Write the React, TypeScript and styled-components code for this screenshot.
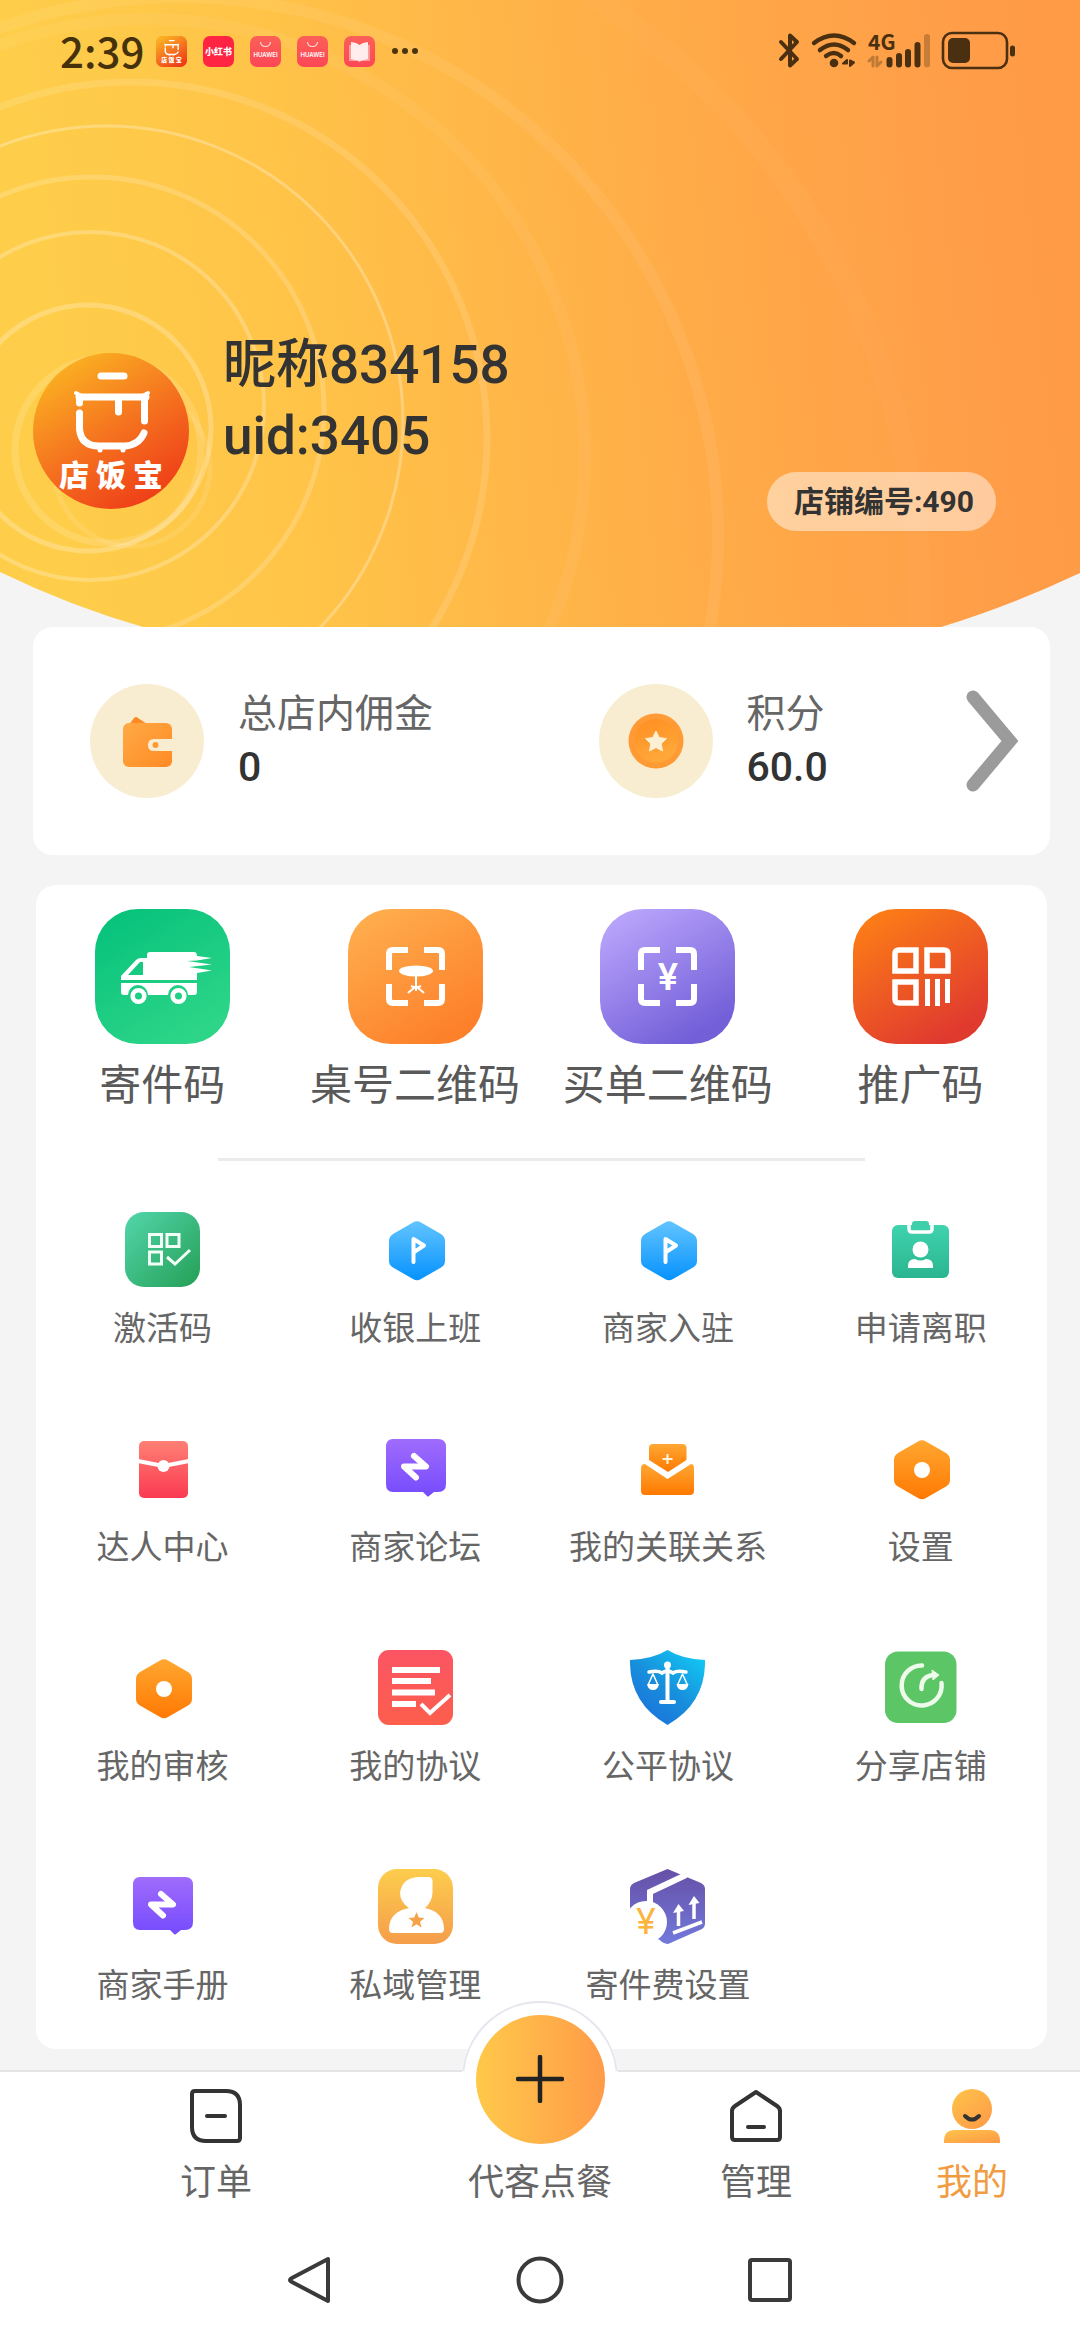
import React from "react";
import styled, { createGlobalStyle } from "styled-components";

const GlobalStyle = createGlobalStyle`
  * { box-sizing: border-box; }
  body { margin: 0; background: #f4f4f4; }
  button, a { font: inherit; color: inherit; text-decoration: none; border: 0; background: none; padding: 0; cursor: pointer; }
  svg { display: block; }
`;

const Page = styled.div`
  min-height: 100vh;
  display: flex;
  flex-direction: column;
  overflow-x: hidden;
  color: #666;
  font-family: Roboto, "Noto Sans CJK SC", sans-serif;
`;

/* ---------- header ---------- */

const Hero = styled.header`
  position: relative;
`;

const HeroArt = styled.svg`
  position: absolute;
  inset: 0;
  width: 100%;
  height: 100%;
`;

const StatusBar = styled.div`
  position: relative;
  display: flex;
  align-items: center;
  justify-content: space-between;
  height: 102px;
  padding: 0 64px 0 60px;
  color: #4a3410;
`;

const StatusGroup = styled.div<{ $gap: number }>`
  display: flex;
  align-items: center;
  gap: ${(p) => p.$gap}px;
`;

const Clock = styled.time`
  margin-right: -4px;
  padding-bottom: 2px;
  font: 500 42px/50px "Noto Sans CJK SC", sans-serif;
  color: #45310c;
`;

const Profile = styled.section`
  position: relative;
  display: flex;
  align-items: flex-start;
  padding: 228px 84px 96px 33px;
`;

const Avatar = styled.button`
  margin-top: 23px;
  border-radius: 50%;
  overflow: hidden;
`;

const Identity = styled.h1`
  flex: 1;
  margin: 0 0 0 34px;
  min-height: 201px;
  color: #333;
  font-size: 53px;
  font-weight: 500;
  line-height: 71px;
`;

const Line = styled.span`
  display: block;
`;

const ShopBadge = styled.span`
  align-self: flex-end;
  padding: 0 22px 0 27px;
  border-radius: 30px;
  background: rgba(255, 255, 255, 0.47);
  color: #333;
  font-size: 30px;
  font-weight: 700;
  line-height: 59px;
  white-space: nowrap;
`;

/* ---------- balance card ---------- */

const Balance = styled.section`
  position: relative;
  display: flex;
  margin: 0 30px 0 33px;
  border-radius: 20px;
  background: #fff;
`;

const BalanceItem = styled.button`
  flex: 1;
  display: flex;
  align-items: center;
  padding: 57px 32px 57px 57px;
  text-align: left;
`;

const BalanceText = styled.span`
  flex: 1;
  display: flex;
  flex-direction: column;
  margin-left: 34px;
`;

const BalanceLabel = styled.span`
  font-size: 39px;
  line-height: 52px;
`;

const BalanceValue = styled.span`
  color: #333;
  font-size: 41px;
  font-weight: 500;
  line-height: 54px;
`;

/* ---------- services card ---------- */

const Services = styled.section`
  margin: 30px 33px 21px 36px;
  padding: 24px 0 39px;
  border-radius: 20px;
  background: #fff;
`;

const CodeGrid = styled.div`
  display: grid;
  grid-template-columns: repeat(4, 1fr);
`;

const CodeItem = styled.button`
  display: flex;
  flex-direction: column;
  align-items: center;
  gap: 14px;
  color: #595959;
  font-size: 42px;
  line-height: 56px;
  white-space: nowrap;
`;

const Divider = styled.hr`
  width: 64%;
  height: 3px;
  margin: 44px auto 51px;
  border: 0;
  background: #ebebeb;
`;

const ToolGrid = styled.div`
  display: grid;
  grid-template-columns: repeat(4, 1fr);
  row-gap: 78px;
`;

const ToolItem = styled.button`
  display: flex;
  flex-direction: column;
  align-items: center;
  gap: 18px;
  font-size: 33px;
  line-height: 48px;
  white-space: nowrap;
`;

/* ---------- bottom bars ---------- */

const TabBar = styled.nav`
  display: grid;
  grid-template-columns: 2fr 1fr 1fr 1fr;
  align-items: end;
  border-top: 2px solid #e4e4e7;
  background: #fff;
`;

const Tab = styled.a<{ $active?: boolean }>`
  display: flex;
  flex-direction: column;
  align-items: center;
  gap: 14px;
  color: ${(p) => (p.$active ? "#f19c42" : "#666")};
  font-size: 36px;
  line-height: 52px;
  white-space: nowrap;
`;

const OrderTab = styled(Tab)`
  margin-top: -71px;
  gap: 0;
`;

const Bubble = styled.span`
  position: relative;
  display: grid;
  place-items: center;
  width: 156px;
  height: 156px;
  border-radius: 50%;
  background: #fff;

  &::before {
    content: "";
    position: absolute;
    inset: 0;
    border: 2px solid #e6e6ee;
    border-radius: 50%;
    clip-path: inset(0 0 86px 0);
  }
`;

const PlusDisc = styled.span`
  display: grid;
  place-items: center;
  width: 129px;
  height: 129px;
  border-radius: 50%;
  background: linear-gradient(90deg, #ffc94a, #ff9b48);
`;

const SystemBar = styled.div`
  flex: 1;
  display: flex;
  justify-content: center;
  gap: 182px;
  padding: 47px 0 36px;
  background: #fff;
`;

const SystemKey = styled.button`
  width: 48px;
  height: 48px;
`;

/* ---------- drawings ---------- */

type GradProps = { id: string; from: string; to: string; x2?: number; y2?: number };
const Grad = ({ id, from, to, x2 = 1, y2 = 1 }: GradProps) => (
  <linearGradient id={id} x1="0" y1="0" x2={x2} y2={y2}>
    <stop offset="0" stopColor={from} />
    <stop offset="1" stopColor={to} />
  </linearGradient>
);

const CJK = "'Noto Sans CJK SC', sans-serif";

const rings = [
  { cx: 108, cy: 450, r: 93, w: 7, o: 0.14 },
  { cx: 132, cy: 468, r: 78, w: 5, o: 0.1 },
  { cx: 88, cy: 428, r: 123, w: 5, o: 0.24 },
  { cx: 90, cy: 406, r: 174, w: 4, o: 0.24 },
  { cx: 92, cy: 409, r: 232, w: 5, o: 0.18 },
  { cx: 107, cy: 422, r: 296, w: 3, o: 0.28 },
  { cx: 131, cy: 438, r: 356, w: 7, o: 0.13 },
  { cx: 148, cy: 456, r: 437, w: 12, o: 0.05 },
  { cx: 180, cy: 535, r: 538, w: 12, o: 0.07 },
  { cx: 200, cy: 600, r: 720, w: 22, o: 0.025 },
];

const HeroBackground = () => (
  <HeroArt viewBox="0 0 1080 627" preserveAspectRatio="none" aria-hidden="true">
    <defs>
      <linearGradient id="hero" x1="0" y1="0.06" x2="1" y2="0">
        <stop offset="0" stopColor="#fece4a" />
        <stop offset="0.25" stopColor="#ffc348" />
        <stop offset="0.6" stopColor="#ffac48" />
        <stop offset="0.9" stopColor="#ff9c48" />
        <stop offset="1" stopColor="#ff9b46" />
      </linearGradient>
      <clipPath id="heroClip">
        <path d="M0 0H1080V573Q1010 606 941 627H143Q70 606 0 572Z" />
      </clipPath>
    </defs>
    <g clipPath="url(#heroClip)">
      <rect width="1080" height="627" fill="url(#hero)" />
      {rings.map((g) => (
        <circle key={g.r} cx={g.cx} cy={g.cy} r={g.r} fill="none" stroke="#fff" strokeWidth={g.w} strokeOpacity={g.o} />
      ))}
    </g>
  </HeroArt>
);

const PotMark = () => (
  <g fill="none" stroke="#fff" strokeWidth="7" strokeLinecap="round">
    <path d="M68 23H91" />
    <path d="M46 44H113M111.500 44V68M85.500 44V59M46.500 44V50" />
    <path d="M43 40L50 44M115 40L108 44" strokeWidth="4" />
    <path d="M46.500 60V76Q48 93 66 93H92Q106 92 111 80" />
    <path d="M67 94V97M90 94V97" strokeWidth="5" />
  </g>
);

const AvatarArt = ({ size, id }: { size: number; id: string }) => (
  <svg width={size} height={size} viewBox="0 0 156 156" aria-label="店饭宝">
    <defs>
      <linearGradient id={id} x1="0.15" y1="0.05" x2="0.75" y2="1">
        <stop offset="0" stopColor="#fbb422" />
        <stop offset="0.5" stopColor="#f5741f" />
        <stop offset="1" stopColor="#ee3a17" />
      </linearGradient>
    </defs>
    <rect width="156" height="156" fill={`url(#${id})`} />
    <PotMark />
    <text x="26 63 100" y="133" fontSize="30" fontWeight="900" fill="#fff" fontFamily={CJK}>店饭宝</text>
  </svg>
);

const AppTile = styled.span<{ $bg: string }>`
  width: 31px;
  height: 31px;
  border-radius: 7px;
  overflow: hidden;
  background: ${(p) => p.$bg};
`;

const HuaweiTile = () => (
  <AppTile $bg="linear-gradient(#fb6058, #fd4656)">
    <svg width="31" height="31" viewBox="0 0 31 31">
      <path d="M10.500 6Q11 10.500 15.500 10.500T20.500 6" fill="none" stroke="#ffd9d6" strokeWidth="1.200" />
      <text x="15.500" y="20.500" textAnchor="middle" fontSize="6" fontWeight="600" fill="#fff" fontFamily="Inter, sans-serif">HUAWEI</text>
    </svg>
  </AppTile>
);

const Dots = () => (
  <svg width="28" height="8" viewBox="0 0 28 8" fill="#4a3410">
    <circle cx="4" cy="4" r="3" /><circle cx="14" cy="4" r="3" /><circle cx="24" cy="4" r="3" />
  </svg>
);

const StatusIcons = () => (
  <svg width="240" height="60" viewBox="776 21 240 60" fill="none" stroke="#4a3010" strokeLinecap="round" strokeLinejoin="round" aria-label="状态">
    <path d="M781 42L797 59L790 65.500V35.500L797 42L781 59" strokeWidth="4" />
    <path d="M814 43Q834 28 854 43M820 50Q834 39 848 50M826 56Q834 50 841 56" strokeWidth="4.500" />
    <circle cx="834" cy="63" r="4.300" fill="#4a3010" stroke="none" />
    <path d="M843 63.500H847V60ZM850 66V60.500L854 62.500Z" strokeWidth="2" fill="#4a3010" />
    <text x="868" y="50" fontSize="21" fontWeight="700" fill="#4a3010" stroke="none" fontFamily={CJK}>4G</text>
    <path d="M869 61L873 57V66M877 57V66L881 62" strokeWidth="3" strokeOpacity="0.35" />
    <path d="M889.500 60V64.500M899 56V64.500M908 52V64.500M917.500 45V64.500" strokeWidth="6" />
    <path d="M927 37V64.500" strokeWidth="6" strokeOpacity="0.3" />
    <rect x="943" y="33" width="64" height="35" rx="9" strokeWidth="2.600" />
    <rect x="948" y="38" width="22" height="25" rx="5" fill="#4a3010" stroke="none" />
    <path d="M1012.500 48V54" strokeWidth="5" />
  </svg>
);

const WalletIcon = () => (
  <svg width="114" height="114" viewBox="0 0 114 114">
    <defs><Grad id="wallet" from="#ffaa45" to="#ff8a24" /></defs>
    <circle cx="57" cy="57" r="57" fill="#f9edd1" />
    <path d="M38 42L44 34Q46 32 48 34L60 42Z" fill="#ff8a24" />
    <rect x="33" y="39" width="49" height="44" rx="6" fill="url(#wallet)" />
    <path d="M83 55H64Q58 55 58 61T64 67H83Z" fill="#f9edd1" />
    <circle cx="65.500" cy="61" r="3" fill="#ff9a32" />
  </svg>
);

const CoinIcon = () => (
  <svg width="114" height="114" viewBox="0 0 114 114">
    <defs><Grad id="coin" from="#ff8d20" to="#ffa83a" x2={0.4} /></defs>
    <circle cx="57" cy="57" r="57" fill="#f9edd1" />
    <circle cx="57" cy="57" r="27.500" fill="#ff9a35" />
    <circle cx="57" cy="57" r="22" fill="url(#coin)" />
    <path d="M57 47L60.200 53.600L67.500 54.600L62.200 59.700L63.500 67L57 63.500L50.500 67L51.800 59.700L46.500 54.600L53.800 53.600Z" fill="#fbefd4" stroke="#fbefd4" strokeLinejoin="round" />
  </svg>
);

const ChevronIcon = () => (
  <svg width="54" height="104" viewBox="0 0 54 104">
    <path d="M9 8L46 52L9 96" fill="none" stroke="#9b9b9b" strokeWidth="13" strokeLinecap="round" />
  </svg>
);

type TileProps = { id: string; from: string; to: string; children: React.ReactNode };
const CodeTile = ({ id, from, to, children }: TileProps) => (
  <svg width="135" height="135" viewBox="0 0 135 135">
    <defs><Grad id={id} from={from} to={to} x2={0.6} /></defs>
    <rect width="135" height="135" rx="43" fill={`url(#${id})`} />
    {children}
  </svg>
);

const ScanFrame = () => (
  <path d="M41 61V45Q41 41 45 41H60M76 41H90Q94 41 94 45V61M94 75V90Q94 94 90 94H76M60 94H45Q41 94 41 90V75" fill="none" stroke="#fff" strokeWidth="6" />
);

const VanIcon = () => (
  <CodeTile id="van" from="#04c07a" to="#2cd588">
    <path fill="#fff" fillRule="evenodd" d="M55 43H99Q102 43 102 47L117 49L102 51.500L92 52L117 55.500L94 58L117 61.500L102 64V71H26V67L41 51Q43 49 46 49H52V46Q52 43 55 43ZM48 53H45L33 66H48Z" />
    <path fill="#fff" d="M26 74H102V83Q102 86 99 86H93A10 10 0 0 0 73 86H53A10 10 0 0 0 33 86H29Q26 86 26 83Z" />
    <circle cx="43.500" cy="87" r="5.800" fill="none" stroke="#fff" strokeWidth="4.600" />
    <circle cx="83.500" cy="87" r="5.800" fill="none" stroke="#fff" strokeWidth="4.600" />
  </CodeTile>
);

const TableIcon = () => (
  <CodeTile id="table" from="#ffb251" to="#fd812b">
    <ScanFrame />
    <ellipse cx="68" cy="62" rx="17" ry="5.500" fill="#fff" />
    <path d="M68 66V82M60 84L67 78H69L76 84M63 77L68 79L73 77" fill="none" stroke="#fff" strokeWidth="2" />
  </CodeTile>
);

const PayIcon = () => (
  <CodeTile id="pay" from="#c1acff" to="#735fd8">
    <ScanFrame />
    <text x="68" y="81" textAnchor="middle" fontSize="37" fontWeight="600" fill="#fff" fontFamily="Inter, sans-serif">¥</text>
  </CodeTile>
);

const PromoIcon = () => (
  <CodeTile id="promo" from="#ff8414" to="#e03a2f">
    <g fill="none" stroke="#fff" strokeWidth="5.500">
      <path d="M46 41H63V62H42V45Q42 41 46 41ZM74 41H91Q95 41 95 45V62H74ZM42 73H63V94H46Q42 94 42 90Z" />
      <path d="M74.500 70V97M84.500 70V97M94.500 70V94" strokeWidth="5" />
    </g>
  </CodeTile>
);

const Small = ({ children }: { children: React.ReactNode }) => (
  <svg width="75" height="75" viewBox="0 0 75 75">{children}</svg>
);

const HEX = "M35 10.500Q39 8 43 10.500L63 22Q67 24.500 67 29V49Q67 53 63 55.500L43 67Q39 69.500 35 67L15 55.500Q11 53 11 49V29Q11 24.500 15 22Z";

const ActivateIcon = () => (
  <Small>
    <defs><Grad id="act" from="#52d6ab" to="#259f56" /></defs>
    <rect width="75" height="75" rx="19" fill="url(#act)" />
    <g fill="none" stroke="#f2fff6" strokeWidth="3">
      <path d="M24.500 22.500H36.500V34.500H24.500ZM42 22.500H54V34.500H42ZM24.500 40H36.500V52H24.500Z" />
      <path d="M42 45L50 52L65 38" />
    </g>
  </Small>
);

const FlagIcon = ({ id }: { id: string }) => (
  <Small>
    <defs><Grad id={id} from="#62c4ff" to="#0692fd" x2={0} /></defs>
    <path d={HEX} fill={`url(#${id})`} />
    <path d="M35.500 50V27L46 33.500L36 40" fill="none" stroke="#fff" strokeWidth="4" strokeLinecap="round" strokeLinejoin="round" />
  </Small>
);

const ResignIcon = () => (
  <Small>
    <defs><Grad id="res" from="#3fd3ae" to="#2ab58f" x2={0} /></defs>
    <rect x="9" y="13" width="57" height="53" rx="6" fill="url(#res)" />
    <path d="M26 13V17Q26 20 29 20H46Q49 20 49 17V13" fill="none" stroke="#fff" strokeWidth="3.500" />
    <rect x="29" y="9" width="17" height="9" rx="3" fill="#3fd0ab" />
    <circle cx="37.500" cy="37.500" r="8" fill="#fff" />
    <path d="M25 56V54Q25 47 32 47Q37.500 50 43 47Q50 47 50 54V56Z" fill="#fff" />
  </Small>
);

const EnvelopeRedIcon = () => (
  <Small>
    <defs><Grad id="env" from="#ff8074" to="#fb3a52" x2={0} /></defs>
    <rect x="14" y="10" width="49" height="57" rx="5" fill="url(#env)" />
    <path d="M13 30L38.500 35L64 30" fill="none" stroke="#fff" strokeWidth="4" />
    <circle cx="38.500" cy="35" r="6" fill="#fff" />
  </Small>
);

const ForumIcon = ({ id }: { id: string }) => (
  <Small>
    <defs><Grad id={id} from="#a06cfd" to="#754bfd" x2={0} /></defs>
    <path d="M15 8H60Q68 8 68 16V53Q68 61 60 61H56L51 65Q50 66 49 65L45 61H15Q8 61 8 53V16Q8 8 15 8Z" fill={`url(#${id})`} />
    <path d="M36 25L48 35.500H26L38 46.500" fill="none" stroke="#fff" strokeWidth="6" strokeLinecap="round" strokeLinejoin="round" />
  </Small>
);

const RelationIcon = () => (
  <Small>
    <defs><Grad id="rel" from="#ffa734" to="#ff7900" x2={0} /></defs>
    <path d="M23 13H52Q56.500 13 56.500 17V29L38 41L19 29V17Q19 13 23 13Z" fill="url(#rel)" />
    <path d="M15 33L37.500 48L61 33Q64 33 64 37V60Q64 64 60 64H15Q11 64 11 60V37Q11 33 15 33Z" fill="url(#rel)" />
    <path d="M37.500 23V33M32.500 28H42.500" stroke="#fff3dd" strokeWidth="2" />
  </Small>
);

const NutIcon = ({ id }: { id: string }) => (
  <Small>
    <defs><Grad id={id} from="#ffa730" to="#ff7903" x2={0} /></defs>
    <path d={HEX} fill={`url(#${id})`} />
    <circle cx="39" cy="39" r="8" fill="#fff" />
  </Small>
);

const AgreementIcon = () => (
  <Small>
    <defs><Grad id="agr" from="#fb5564" to="#fd5e4c" x2={0} /></defs>
    <rect width="75" height="75" rx="11" fill="url(#agr)" />
    <path d="M14 20H62M14 31H53M14 42.500H57M14 54H38" stroke="#fff" strokeWidth="6" />
    <path d="M43 54L52 63L72 45" fill="none" stroke="#fff" strokeWidth="4" />
  </Small>
);

const FairIcon = () => (
  <Small>
    <defs>
      <linearGradient id="fair" x1="0.2" y1="1" x2="0.9" y2="0.1">
        <stop offset="0" stopColor="#1b6fdb" />
        <stop offset="0.5" stopColor="#188fdc" />
        <stop offset="1" stopColor="#12c4f2" />
      </linearGradient>
    </defs>
    <path d="M37.500 0Q52 9 75 10Q76 53 37.500 75Q-1 53 0 10Q23 9 37.500 0Z" fill="url(#fair)" />
    <g fill="none" stroke="#fff" strokeLinecap="round">
      <path d="M37.500 15V51M31 52H44" strokeWidth="4" />
      <path d="M19 22Q28 20 32 23Q37.500 19 43 23Q47 20 56 22" strokeWidth="3.500" />
      <path d="M23 24L18.500 34M23 24L27.500 34M52.500 24L48 34M52.500 24L57 34" strokeWidth="1.500" />
    </g>
    <path d="M17 34H29Q28 40 23 40T17 34ZM46.500 34H58.500Q57.500 40 52.500 40T46.500 34Z" fill="#fff" />
    <circle cx="37.500" cy="15" r="3.500" fill="#fff" />
  </Small>
);

const ShareIcon = () => (
  <Small>
    <rect x="2" y="1.500" width="71.500" height="71.500" rx="13" fill="#5cc566" />
    <path d="M39 15.500A20 20 0 1 0 58.500 33" fill="none" stroke="#eefbea" strokeWidth="4.500" strokeLinecap="round" />
    <path d="M38.500 39Q38 26 51 25" fill="none" stroke="#eefbea" strokeWidth="4.500" strokeLinecap="round" />
    <path d="M49 20L56 25L50 30Z" fill="#eefbea" stroke="#eefbea" strokeLinejoin="round" />
  </Small>
);

const PrivateIcon = () => (
  <Small>
    <defs><Grad id="pri" from="#fdcd4d" to="#f59d4a" x2={0} /></defs>
    <rect width="75" height="75" rx="19" fill="url(#pri)" />
    <path d="M40 8H50Q54.500 8 54.500 12V24Q54 33 47 39Q66 43 66 60Q66 64 62 64H15Q11 64 11 60Q11 43 31 39Q22 33 22 24Q24 9 40 8Z" fill="#fff" />
    <path d="M38.500 43L40.700 48.500L46.500 49L42 52.800L43.500 58.500L38.500 55.300L33.500 58.500L35 52.800L30.500 49L36.300 48.500Z" fill="#f6a247" />
  </Small>
);

const FeeIcon = () => (
  <Small>
    <defs><Grad id="fee" from="#6650a6" to="#7279dc" x2={0} /></defs>
    <path d="M37.500 0L71 14Q75 16 75 20V55Q75 58 72 60L38 75Q32 74 30 71L0 60V20Q0 16 4 14Z" fill="url(#fee)" />
    <path d="M56 6L20 23V40" fill="none" stroke="#fff" strokeWidth="6" />
    <circle cx="16" cy="53" r="21" fill="#fff" />
    <text x="16" y="65" textAnchor="middle" fontSize="36" fontWeight="400" fill="#fcb43c" fontFamily="Inter, sans-serif">¥</text>
    <path d="M43 64L72 53M48.500 57V41M64 50V34" stroke="#fff" strokeWidth="3.500" fill="none" />
    <path d="M43 44L48.500 35L54 42ZM58.500 36L64 27L69.500 34Z" fill="#fff" />
  </Small>
);

const OrderIcon = () => (
  <svg width="52" height="54" viewBox="0 0 52 54" fill="none" stroke="#333" strokeWidth="4" strokeLinecap="round">
    <path d="M5 2H36Q50 2 50 16V49Q50 52 47 52H16Q2 52 2 38V5Q2 2 5 2Z" />
    <path d="M17 27H35" />
  </svg>
);

const ShopIcon = () => (
  <svg width="52" height="54" viewBox="0 0 52 54" fill="none" stroke="#333" strokeWidth="4" strokeLinecap="round" strokeLinejoin="round">
    <path d="M26 3L47 17Q50 19 50 22V48Q50 51 47 51H5Q2 51 2 48V22Q2 19 5 17Z" />
    <path d="M18 38H34" />
  </svg>
);

const MeIcon = () => (
  <svg width="56" height="54" viewBox="0 0 56 54">
    <defs><Grad id="me" from="#fec44a" to="#fe9c47" x2={0.8} /></defs>
    <circle cx="28" cy="20" r="20" fill="url(#me)" />
    <path d="M0 54V52Q0 41 11 41H45Q56 41 56 52V54Z" fill="url(#me)" />
    <path d="M21 27Q28 34 35 27" fill="none" stroke="#333" strokeWidth="4" strokeLinecap="round" />
  </svg>
);

const PlusIcon = () => (
  <svg width="48" height="48" viewBox="0 0 48 48" stroke="#222" strokeWidth="4.500" strokeLinecap="round">
    <path d="M24 2V46M2 24H46" />
  </svg>
);

/* ---------- data ---------- */

const codes = [
  { label: "寄件码", icon: <VanIcon /> },
  { label: "桌号二维码", icon: <TableIcon /> },
  { label: "买单二维码", icon: <PayIcon /> },
  { label: "推广码", icon: <PromoIcon /> },
];

const tools = [
  { label: "激活码", icon: <ActivateIcon /> },
  { label: "收银上班", icon: <FlagIcon id="flagA" /> },
  { label: "商家入驻", icon: <FlagIcon id="flagB" /> },
  { label: "申请离职", icon: <ResignIcon /> },
  { label: "达人中心", icon: <EnvelopeRedIcon /> },
  { label: "商家论坛", icon: <ForumIcon id="forumA" /> },
  { label: "我的关联关系", icon: <RelationIcon /> },
  { label: "设置", icon: <NutIcon id="nutA" /> },
  { label: "我的审核", icon: <NutIcon id="nutB" /> },
  { label: "我的协议", icon: <AgreementIcon /> },
  { label: "公平协议", icon: <FairIcon /> },
  { label: "分享店铺", icon: <ShareIcon /> },
  { label: "商家手册", icon: <ForumIcon id="forumB" /> },
  { label: "私域管理", icon: <PrivateIcon /> },
  { label: "寄件费设置", icon: <FeeIcon /> },
];

export default function App() {
  return (
    <Page>
      <GlobalStyle />
      <Hero>
        <HeroBackground />
        <StatusBar>
          <StatusGroup $gap={16}>
            <Clock>2:39</Clock>
            <AppTile $bg="#f5741f"><AvatarArt size={31} id="tileGrad" /></AppTile>
            <AppTile $bg="#ff2442">
              <svg width="31" height="31" viewBox="0 0 31 31">
                <text x="15.500" y="19" textAnchor="middle" fontSize="9" fontWeight="900" fill="#fff" fontFamily={CJK}>小红书</text>
              </svg>
            </AppTile>
            <HuaweiTile />
            <HuaweiTile />
            <AppTile $bg="linear-gradient(#fb6058, #fd4656)">
              <svg width="31" height="31" viewBox="0 0 31 31">
                <path d="M5 9H26V25H17L15.500 26.500L14 25H5Z" fill="#ff9d9d" />
                <path d="M7 6L12 7L15.500 9L19 7L24 6V23L15.500 25L7 23Z" fill="#ffecec" />
              </svg>
            </AppTile>
            <Dots />
          </StatusGroup>
          <StatusIcons />
        </StatusBar>
        <Profile>
          <Avatar aria-label="头像"><AvatarArt size={156} id="avatarGrad" /></Avatar>
          <Identity>
            <Line>昵称834158</Line>
            <Line>uid:3405</Line>
          </Identity>
          <ShopBadge>店铺编号:490</ShopBadge>
        </Profile>
      </Hero>

      <Balance>
        <BalanceItem>
          <WalletIcon />
          <BalanceText>
            <BalanceLabel>总店内佣金</BalanceLabel>
            <BalanceValue>0</BalanceValue>
          </BalanceText>
        </BalanceItem>
        <BalanceItem>
          <CoinIcon />
          <BalanceText>
            <BalanceLabel>积分</BalanceLabel>
            <BalanceValue>60.0</BalanceValue>
          </BalanceText>
          <ChevronIcon />
        </BalanceItem>
      </Balance>

      <Services>
        <CodeGrid>
          {codes.map((c) => (
            <CodeItem key={c.label}>{c.icon}<span>{c.label}</span></CodeItem>
          ))}
        </CodeGrid>
        <Divider />
        <ToolGrid>
          {tools.map((t) => (
            <ToolItem key={t.label}>{t.icon}<span>{t.label}</span></ToolItem>
          ))}
        </ToolGrid>
      </Services>

      <TabBar>
        <Tab href="#orders"><OrderIcon /><span>订单</span></Tab>
        <OrderTab href="#new-order">
          <Bubble><PlusDisc><PlusIcon /></PlusDisc></Bubble>
          <span>代客点餐</span>
        </OrderTab>
        <Tab href="#manage"><ShopIcon /><span>管理</span></Tab>
        <Tab href="#me" $active><MeIcon /><span>我的</span></Tab>
      </TabBar>

      <SystemBar>
        <SystemKey aria-label="返回">
          <svg width="48" height="48" viewBox="0 0 48 48"><path d="M42 3V45L5 25.500Q3 24 5 22.500Z" fill="none" stroke="#3a3a3a" strokeWidth="4" strokeLinejoin="round" /></svg>
        </SystemKey>
        <SystemKey aria-label="主页">
          <svg width="48" height="48" viewBox="0 0 48 48"><circle cx="24" cy="24" r="21.500" fill="none" stroke="#3a3a3a" strokeWidth="4" /></svg>
        </SystemKey>
        <SystemKey aria-label="最近任务">
          <svg width="48" height="48" viewBox="0 0 48 48"><rect x="4" y="4" width="40" height="40" rx="2" fill="none" stroke="#3a3a3a" strokeWidth="4" /></svg>
        </SystemKey>
      </SystemBar>
    </Page>
  );
}
